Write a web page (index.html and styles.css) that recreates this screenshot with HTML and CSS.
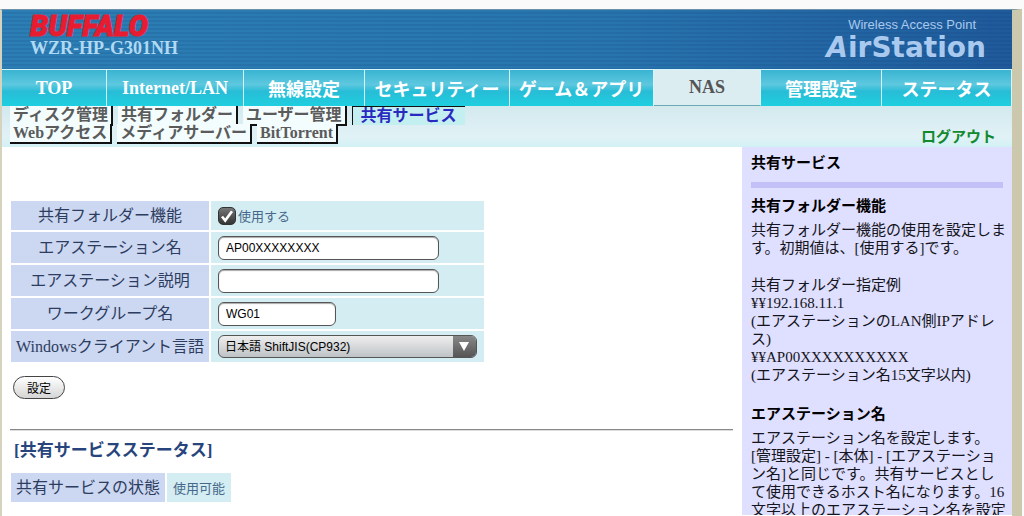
FILE: index.html
```html
<!DOCTYPE html>
<html lang="ja">
<head>
<meta charset="utf-8">
<title>AirStation - 共有サービス</title>
<link rel="stylesheet" href="styles.css">
</head>
<body>
<div class="page">
  <header class="banner">
    <div class="brand">
      <div class="logo">BUFFALO</div>
      <div class="model">WZR-HP-G301NH</div>
    </div>
    <div class="product">
      <div class="product-type">Wireless Access Point</div>
      <div class="product-name"><i>A</i>irStation</div>
    </div>
  </header>
  <nav class="tabs">
    <a href="#">TOP</a>
    <a href="#">Internet/LAN</a>
    <a href="#">無線設定</a>
    <a href="#">セキュリティー</a>
    <a href="#">ゲーム＆アプリ</a>
    <a href="#" class="current">NAS</a>
    <a href="#">管理設定</a>
    <a href="#">ステータス</a>
  </nav>
  <div class="subbar">
    <nav class="subnav">
      <div class="subrow upper">
        <a href="#">ディスク管理</a>
        <a href="#">共有フォルダー</a>
        <a href="#">ユーザー管理</a>
        <a href="#" class="active">共有サービス</a>
      </div>
      <div class="subrow lower">
        <a href="#">Webアクセス</a>
        <a href="#">メディアサーバー</a>
        <a href="#">BitTorrent</a>
      </div>
    </nav>
    <a href="#" class="logout">ログアウト</a>
  </div>
  <div class="columns">
    <main class="content">
      <form>
        <table class="grid settings">
          <tr>
            <th scope="row">共有フォルダー機能</th>
            <td><label class="check"><input type="checkbox" checked><svg viewBox="0 0 18 18" width="18" height="18"><path d="M4 9.5 7.2 13.5 14 4.2" fill="none" stroke="#fff" stroke-width="2.6"/></svg><span>使用する</span></label></td>
          </tr>
          <tr>
            <th scope="row"><label for="name">エアステーション名</label></th>
            <td><input class="text" id="name" type="text" value="AP00XXXXXXXX"></td>
          </tr>
          <tr>
            <th scope="row"><label for="desc">エアステーション説明</label></th>
            <td><input class="text" id="desc" type="text"></td>
          </tr>
          <tr>
            <th scope="row"><label for="group">ワークグループ名</label></th>
            <td><input class="text short" id="group" type="text" value="WG01"></td>
          </tr>
          <tr>
            <th scope="row"><label for="codepage">Windowsクライアント言語</label></th>
            <td><div class="select"><select id="codepage"><option>日本語 ShiftJIS(CP932)</option></select></div></td>
          </tr>
        </table>
        <button class="submit" type="button">設定</button>
      </form>
      <hr>
      <h2>[共有サービスステータス]</h2>
      <table class="grid status">
        <tr><th scope="row">共有サービスの状態</th><td>使用可能</td></tr>
      </table>
    </main>
    <aside class="help">
      <h3 class="title">共有サービス</h3>
      <h3>共有フォルダー機能</h3>
      <p>共有フォルダー機能の使用を設定します。初期値は、[使用する]です。</p>
      <p>共有フォルダー指定例<br>¥¥192.168.11.1<br>(エアステーションのLAN側IPアドレス)<br>¥¥AP00XXXXXXXXXX<br>(エアステーション名15文字以内)</p>
      <h3>エアステーション名</h3>
      <p>エアステーション名を設定します。<br>[管理設定] - [本体] - [エアステーション名]と同じです。共有サービスとして使用できるホスト名になります。16文字以上のエアステーション名を設定</p>
    </aside>
  </div>
</div>
</body>
</html>
```
FILE: styles.css
```css
* { box-sizing: border-box; }
body {
  margin: 0;
  background: #fafafa;
  font-family: "Liberation Serif", "Noto Sans CJK JP", serif;
  font-size: 16px;
}
a { text-decoration: none; }
.page {
  display: flex;
  flex-direction: column;
  height: 100vh;
  overflow: hidden;
  padding-top: 9px;
  padding-right: 2px;
}
.page > * {
  flex-shrink: 0;
  border-left: 2px solid #d5d2bd;
  border-right: 10px solid #ccc8ad;
}

.banner {
  display: flex;
  justify-content: space-between;
  height: 60px;
  padding: 3px 26px 0 28px;
  border-top: 1px solid #6d91aa;
  background:
    repeating-linear-gradient(transparent 0 2px, rgba(10, 50, 110, 0.12) 2px 4px),
    linear-gradient(90deg, #2c7fb5, #2875ae 60%, #1f5a9b);
  background-clip: padding-box;
}
.logo {
  font: italic 900 29px/26px Roboto, sans-serif;
  color: #e81c30;
  -webkit-text-stroke: 1px #e81c30;
}
.model {
  font-size: 18px;
  font-weight: bold;
  line-height: 19px;
  color: #b0d9f4;
}
.product {
  color: #a9c9ee;
  text-align: right;
}
.product-type {
  padding: 3px 10px 0 0;
  font: 13px/18px "Liberation Sans", sans-serif;
}
.product-name {
  font: bold 28px/28px "DejaVu Sans", sans-serif;
}

.tabs {
  display: grid;
  grid-template-columns: 105fr 137fr 121fr 145fr 144fr 107fr 121fr 130fr;
  height: 37px;
  background: #d5f3f8;
}
.tabs a {
  display: flex;
  align-items: center;
  justify-content: center;
  border: solid #d5f5fa;
  border-width: 1px 1px 0 0;
  background: linear-gradient(#39b4d2, #5dc8df 40%, #27bdd6 60%, #1fcfe0);
  color: #fff;
  font-size: 18px;
  font-weight: bold;
  white-space: nowrap;
}
.tabs .current {
  border-bottom: 1px solid #68a9b3;
  background: #dcedf2;
  color: #555;
}

.subbar {
  display: flex;
  justify-content: space-between;
  align-items: flex-end;
  height: 41px;
  padding-right: 16px;
  background: linear-gradient(#d3e9ee, #e1f2f6 75%, #d2f1f5);
  background-clip: padding-box;
}
.subnav {
  align-self: flex-start;
  padding-left: 8px;
}
.subrow {
  display: flex;
  gap: 5px;
}
.lower { margin-top: -2px; }
.subrow a {
  height: 20px;
  padding: 0 3px;
  border: solid #111;
  border-width: 0 2px 2px 0;
  background: #f3fdfe;
  color: #5b5b5b;
  font-weight: bold;
  line-height: 18px;
  white-space: nowrap;
}
.lower a { position: relative; }
.upper .active {
  height: 19px;
  padding: 0 8px;
  border-width: 1px 0 0 1px;
  background: #c4eff1;
  color: #2a2ac0;
}
.logout {
  color: #12892f;
  font-size: 15px;
  font-weight: bold;
  line-height: 20px;
}

.columns {
  display: flex;
  flex: 1 0 auto;
  background: #fff;
}
.content {
  flex: 1;
  padding: 52px 9px 0 7px;
}
.grid { border-spacing: 2px; }
.grid th {
  padding: 0 5px;
  background: #ccd7f1;
  color: #2c3d5f;
  font-weight: normal;
  line-height: 22px;
  white-space: nowrap;
}
.grid td {
  padding: 0 7px;
  background: #d4edf3;
  color: #46688a;
  font-size: 13px;
}
.settings { width: 477px; }
.settings th {
  width: 198px;
  padding: 0;
}
.settings tr { height: 31px; }
.settings tr:first-child { height: 29px; }
.check {
  display: flex;
  align-items: center;
  gap: 2px;
  position: relative;
}
.check input {
  appearance: none;
  width: 18px;
  height: 18px;
  margin: 0;
  border: 1px solid #333;
  border-radius: 5px;
  background: linear-gradient(#777, #333);
}
.check svg {
  position: absolute;
  left: 0;
}
.text, .select select, .submit {
  font-family: "Liberation Sans", "Noto Sans CJK JP", sans-serif;
  font-size: 12px;
  color: #000;
}
.text {
  display: block;
  width: 221px;
  height: 24px;
  padding: 0 7px;
  border: 1px solid #555;
  border-radius: 6px;
  background: #fff;
  box-shadow: inset 0 1px 1px #aaa;
}
.short { width: 118px; }
.select {
  position: relative;
  width: 259px;
}
.select select {
  appearance: none;
  display: block;
  width: 100%;
  height: 23px;
  padding: 0 30px 0 6px;
  border: 1px solid #555;
  border-radius: 6px;
  background: linear-gradient(#eee, #bfc3c6);
}
.select::before {
  content: "";
  position: absolute;
  top: 1px;
  right: 1px;
  bottom: 1px;
  width: 23px;
  border-radius: 0 5px 5px 0;
  background: linear-gradient(#888, #555);
  pointer-events: none;
}
.select::after {
  content: "";
  position: absolute;
  top: 7px;
  right: 8px;
  border: solid transparent;
  border-width: 9px 5px 0;
  border-top-color: #fff;
  pointer-events: none;
}
.submit {
  display: block;
  height: 23px;
  margin: 12px 0 0 4px;
  padding: 0 13px;
  border: 1px solid #444;
  border-radius: 12px;
  background: linear-gradient(#fff, #d5d5d5);
}
hr {
  height: 2px;
  margin: 30px 0 0 1px;
  border: solid #888;
  border-width: 1px 0 0;
  border-bottom: 1px solid #ddd;
}
h2 {
  margin: 8px 0 8px 5px;
  color: #27457c;
  font-size: 17px;
  line-height: 24px;
}
.status tr { height: 29px; }
.status td { padding: 0 6px; }

.help {
  width: 270px;
  height: 368px;
  overflow: hidden;
  padding: 5px 5px 0 9px;
  background: #dfdfff;
  color: #151520;
  font-size: 15px;
  line-height: 18px;
}
.help h3 {
  margin: 0 0 4px;
  color: #000;
  font-size: 15px;
  line-height: 22px;
}
.help .title {
  margin: 0 4px 7px 0;
  padding-bottom: 8px;
  border-bottom: 6px solid #c3bff7;
}
.help p { margin: 0 0 19px; }
```
